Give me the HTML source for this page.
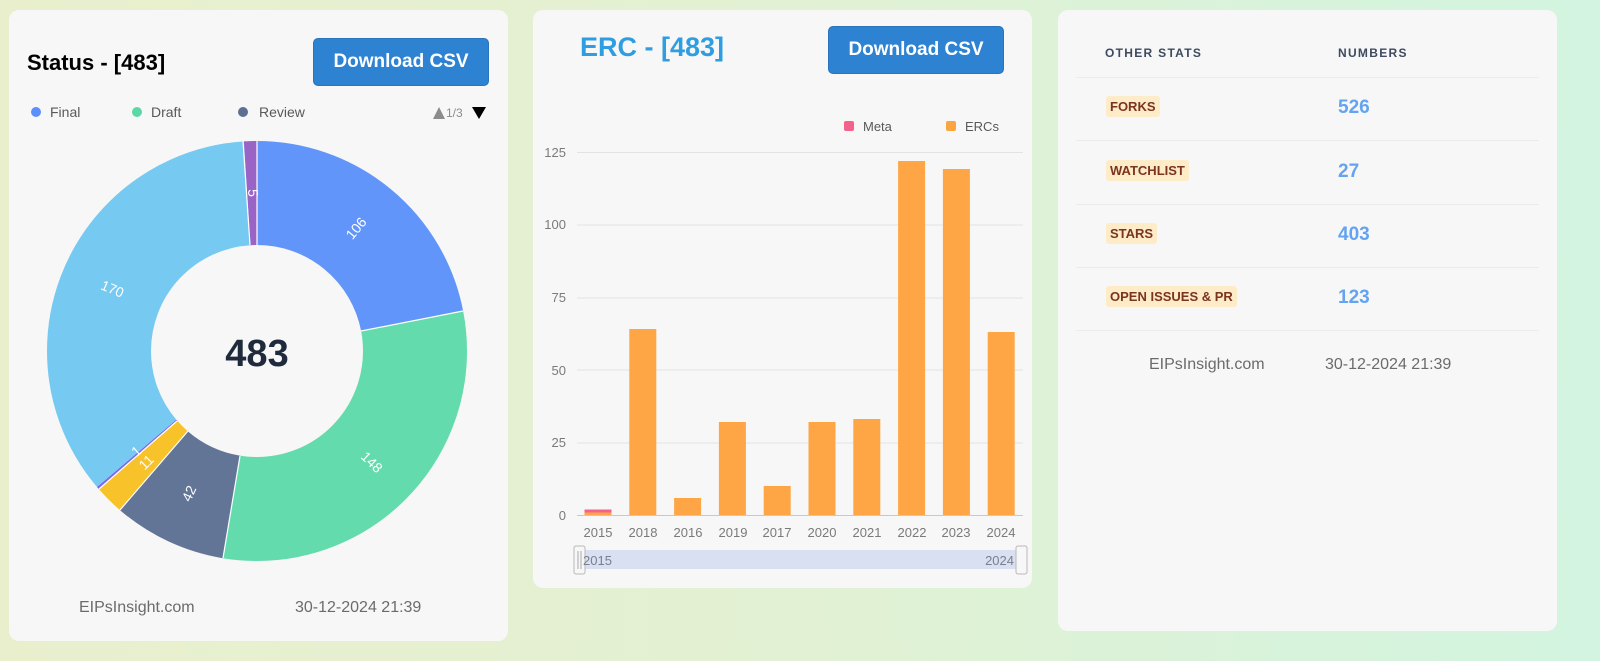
<!DOCTYPE html>
<html><head><meta charset="utf-8"><style>
*{margin:0;padding:0;box-sizing:border-box}
body{width:1600px;height:661px;overflow:hidden;font-family:"Liberation Sans",sans-serif;background:linear-gradient(90deg,#e9efcd 0%,#e2f1d3 50%,#d2f4e0 100%);position:relative}
.card{position:absolute;background:#f7f7f7;border-radius:10px}
.btn{position:absolute;background:#2d82d2;color:#fff;font-weight:bold;font-size:19px;border-radius:5px;display:flex;align-items:center;justify-content:center;border:1px solid #2a73bd}
.foot{position:absolute;color:#6b6b6b;font-size:16px}
.hd{position:absolute;font-size:12px;font-weight:bold;letter-spacing:1.3px;color:#3d4a5f}
.row{position:absolute;left:18px;right:18px;height:1px;background:#ececf0}
.badge{position:absolute;left:48px;background:#feebc8;color:#7b341e;font-weight:bold;font-size:13px;padding:3px 4px;border-radius:3px}
.num{position:absolute;left:280px;color:#63a4f0;font-weight:bold;font-size:19px}
</style></head><body>

<div class="card" style="left:9px;top:10px;width:499px;height:631px">
  <div style="position:absolute;left:18px;top:40px;font-size:22px;font-weight:bold;color:#000">Status - [483]</div>
  <div class="btn" style="left:304px;top:28px;width:176px;height:48px">Download CSV</div>
  <svg style="position:absolute;left:0;top:0" width="499" height="631">
    <circle cx="27" cy="102" r="5" fill="#5b8ff9"/><text x="41" y="107" font-size="14" fill="#595959">Final</text>
    <circle cx="128" cy="102" r="5" fill="#5ad8a6"/><text x="142" y="107" font-size="14" fill="#595959">Draft</text>
    <circle cx="234" cy="102" r="5" fill="#5d7092"/><text x="250" y="107" font-size="14" fill="#595959">Review</text>
    <polygon points="424,109 436,109 430,97" fill="#8c8c8c"/>
    <text x="437" y="107" font-size="12" fill="#8c8c8c">1/3</text>
    <polygon points="463,97 477,97 470,109" fill="#000"/>
  </svg>
</div>
<svg style="position:absolute;left:0;top:0" width="520" height="661">
  <g transform="rotate(-90 257 351)" fill="none" stroke-width="104">
    <circle cx="257" cy="351" r="158" stroke="#6295f9" stroke-dasharray="217.86 2000" stroke-dashoffset="0"/>
    <circle cx="257" cy="351" r="158" stroke="#64dbad" stroke-dasharray="304.18 2000" stroke-dashoffset="-217.86"/>
    <circle cx="257" cy="351" r="158" stroke="#627597" stroke-dasharray="86.32 2000" stroke-dashoffset="-522.04"/>
    <circle cx="257" cy="351" r="158" stroke="#f8c22a" stroke-dasharray="22.61 2000" stroke-dashoffset="-608.36"/>
    <circle cx="257" cy="351" r="158" stroke="#7d66f0" stroke-dasharray="2.06 2000" stroke-dashoffset="-630.97"/>
    <circle cx="257" cy="351" r="158" stroke="#76c9f0" stroke-dasharray="349.39 2000" stroke-dashoffset="-633.03"/>
    <circle cx="257" cy="351" r="158" stroke="#9a63c6" stroke-dasharray="10.28 2000" stroke-dashoffset="-982.42"/>
  </g>
  <g stroke="#fff" stroke-width="1.2">
    <line x1="257" y1="245" x2="257" y2="141"/>
    <line x1="361" y1="331" x2="463" y2="311"/>
    <line x1="240" y1="456" x2="223" y2="558"/>
    <line x1="188" y1="431" x2="120" y2="510"/>
    <line x1="177" y1="421" x2="99" y2="489"/>
    <line x1="250" y1="245" x2="243" y2="141"/>
  </g>
  <g fill="#fff" font-size="14" text-anchor="middle" dominant-baseline="middle">
    <text transform="translate(357,229) rotate(-50)">106</text>
    <text transform="translate(371,463) rotate(44)">148</text>
    <text transform="translate(190,494) rotate(-65)">42</text>
    <text transform="translate(147,463) rotate(-45)">11</text>
    <text transform="translate(137,452) rotate(-41)">1</text>
    <text transform="translate(112,290) rotate(23)">170</text>
    <text transform="translate(252,193) rotate(88)">5</text>
  </g>
  <text x="257" y="366" text-anchor="middle" font-size="38" font-weight="bold" fill="#1f2a3c">483</text>
</svg>
<div class="foot" style="left:79px;top:599px">EIPsInsight.com</div>
<div class="foot" style="left:295px;top:599px">30-12-2024 21:39</div>

<div class="card" style="left:533px;top:10px;width:499px;height:578px">
  <div style="position:absolute;left:47px;top:22px;font-size:27px;font-weight:bold;color:#2f9ee0">ERC - [483]</div>
  <div class="btn" style="left:295px;top:16px;width:176px;height:48px">Download CSV</div>
</div>
<svg style="position:absolute;left:533px;top:10px" width="499" height="578">
  <rect x="311" y="111" width="10" height="10" rx="2" fill="#f4628b"/><text x="330" y="121" font-size="13" fill="#595959">Meta</text>
  <rect x="413" y="111" width="10" height="10" rx="2" fill="#fba541"/><text x="432" y="121" font-size="13" fill="#595959">ERCs</text>
  <g stroke="#e3e3e3" stroke-width="1">
    <line x1="44" y1="142.5" x2="490" y2="142.5"/><line x1="44" y1="215" x2="490" y2="215"/>
    <line x1="44" y1="288" x2="490" y2="288"/><line x1="44" y1="360" x2="490" y2="360"/>
    <line x1="44" y1="433" x2="490" y2="433"/>
  </g>
  <line x1="44" y1="505.5" x2="490" y2="505.5" stroke="#c8c8c8"/>
  <g font-size="13" fill="#7a7a7a" text-anchor="end">
    <text x="33" y="147">125</text><text x="33" y="219">100</text><text x="33" y="292">75</text>
    <text x="33" y="365">50</text><text x="33" y="437">25</text><text x="33" y="510">0</text>
  </g>
  <g fill="#fea646">
    <rect x="51.5" y="502" width="27" height="3"/>
    <rect x="96.3" y="319" width="27" height="186"/>
    <rect x="141.1" y="488" width="27" height="17"/>
    <rect x="185.9" y="412" width="27" height="93"/>
    <rect x="230.7" y="476" width="27" height="29"/>
    <rect x="275.5" y="412" width="27" height="93"/>
    <rect x="320.3" y="409" width="27" height="96"/>
    <rect x="365.1" y="151" width="27" height="354"/>
    <rect x="409.9" y="159" width="27" height="346"/>
    <rect x="454.7" y="322" width="27" height="183"/>
  </g>
  <rect x="51.5" y="499.5" width="27" height="3" fill="#f4628b"/>
  <g font-size="13" fill="#7a7a7a" text-anchor="middle">
    <text x="65" y="527">2015</text><text x="110" y="527">2018</text><text x="155" y="527">2016</text>
    <text x="200" y="527">2019</text><text x="244" y="527">2017</text><text x="289" y="527">2020</text>
    <text x="334" y="527">2021</text><text x="379" y="527">2022</text><text x="423" y="527">2023</text>
    <text x="468" y="527">2024</text>
  </g>
  <rect x="47" y="540" width="440" height="19" fill="#d9e0f1"/>
  <rect x="41" y="536" width="11" height="28" rx="2" fill="#f7f7f7" stroke="#b8b8b8"/>
  <line x1="45" y1="541" x2="45" y2="559" stroke="#aaa"/><line x1="48" y1="541" x2="48" y2="559" stroke="#aaa"/>
  <rect x="483" y="536" width="11" height="28" rx="2" fill="#f7f7f7" stroke="#b8b8b8"/>
  <text x="50" y="555" font-size="13" fill="#7a7f8f">2015</text>
  <text x="481" y="555" font-size="13" fill="#7a7f8f" text-anchor="end">2024</text>
</svg>

<div class="card" style="left:1058px;top:10px;width:499px;height:621px">
  <div class="hd" style="left:47px;top:36px">OTHER STATS</div>
  <div class="hd" style="left:280px;top:36px">NUMBERS</div>
  <div class="row" style="top:67px"></div>
  <div class="badge" style="top:86px">FORKS</div><div class="num" style="top:87px">526</div>
  <div class="row" style="top:130px"></div>
  <div class="badge" style="top:150px">WATCHLIST</div><div class="num" style="top:151px">27</div>
  <div class="row" style="top:194px"></div>
  <div class="badge" style="top:213px">STARS</div><div class="num" style="top:214px">403</div>
  <div class="row" style="top:257px"></div>
  <div class="badge" style="top:276px">OPEN ISSUES &amp; PR</div><div class="num" style="top:277px">123</div>
  <div class="row" style="top:320px"></div>
  <div class="foot" style="left:91px;top:346px">EIPsInsight.com</div>
  <div class="foot" style="left:267px;top:346px">30-12-2024 21:39</div>
</div>
</body></html>
